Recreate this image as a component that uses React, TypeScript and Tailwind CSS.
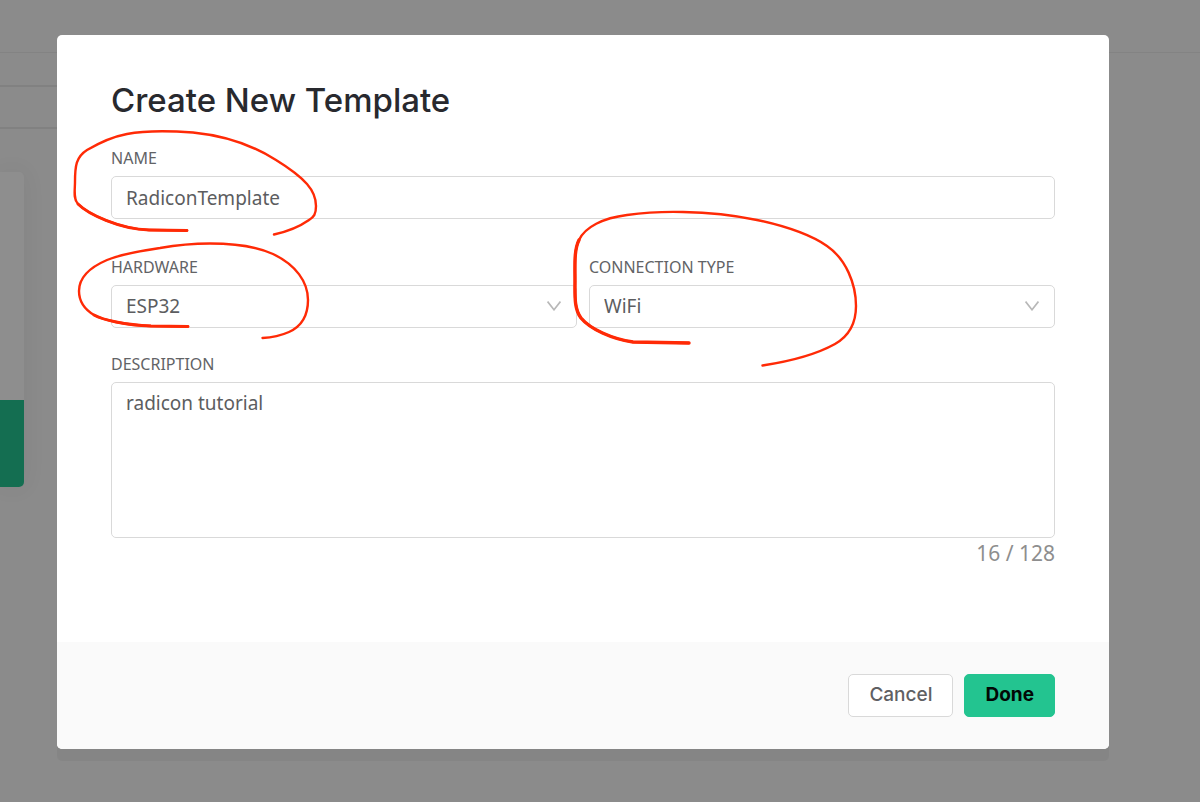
import { useState } from "react";

const labelStyles = "block text-base leading-6 mb-1.5 uppercase text-[#626366]";
const fieldStyles = "block w-full border border-[#d9d9d9] rounded-[5px] bg-white px-3.5 text-[19px] text-[#5c5d60] outline-none focus:border-[#23c490]";
const buttonStyles = "h-[43px] px-5 rounded-[5px] border text-[19px] font-['Inter',sans-serif]";

type SelectFieldProps = {
    id: string
    label: string
    options: string[]
}

function SelectField({ id, label, options }: SelectFieldProps) {
    return (
        <div>
            <label htmlFor={id} className={labelStyles}>{label}</label>
            <div className="relative">
                <select id={id} className={`${fieldStyles} h-[43px] appearance-none`}>
                    {options.map((option) => (
                        <option key={option}>{option}</option>
                    ))}
                </select>
                <svg
                    viewBox="0 0 14 10"
                    className="absolute right-4 top-4 w-3.5 h-2.5 pointer-events-none"
                    fill="none"
                    stroke="#b8b8b8"
                    strokeWidth="1.6"
                >
                    <path d="M0.6 0.6 L7 8.8 L13.4 0.6" />
                </svg>
            </div>
        </div>
    );
}

// Dimmed page behind the dialog
function Backdrop() {
    return (
        <div className="col-start-1 row-start-1 overflow-hidden" aria-hidden="true">
            <div className="h-[53px] border-b border-[#838383]" />
            <div className="w-1/2 mt-8 h-[44px] border-y-2 border-[#818181]" />
            <div className="w-6 mt-[43px] h-[315px] flex flex-col rounded-r-[5px] overflow-hidden bg-[#8e8e8e] shadow-[0_0_24px_rgba(0,0,0,0.06)]">
                <div className="flex-1" />
                <div className="h-[87px] bg-[#146e51]" />
            </div>
        </div>
    );
}

// Hand-drawn marks around the fields to fill in
function Marks() {
    return (
        <svg
            className="absolute inset-0 w-full h-full pointer-events-none"
            fill="none"
            stroke="#ff2a06"
            strokeWidth="2.4"
            strokeLinecap="round"
            strokeLinejoin="round"
            aria-hidden="true"
        >
            <path d="M187 230.5 L149 230 C119 229 88 214 78 204 C73 199 75 190 75 182 C75 166 76 157 87 150 C99 143 111 137 127 134 C148 130 172 131 193 132.5 C228 136 254 146 276 160 C289 168 299 175 307 184 C314 192 316 199 316 206 C316 214 314 217 309 220 C299 227 290 231 274 234.5" />
            <path strokeWidth="2.9" d="M187 230.5 L149 230 C119 229 88 214 78 204" />
            <path d="M188 326.5 L151 326 C125 325 103 320 94 315 C84 309 79 300 79 291 C79 276 93 266 107 260 C119 255 140 251 160 248 C177 245 194 243.5 210 243.5 C238 243.5 258 247 273 254 C296 265 308 282 308 300 C308 317 300 327 289 332 C280 336 272 337.5 262.5 338" />
            <path strokeWidth="2.9" d="M188 326.5 L151 326 C125 325 103 320 94 315" />
            <path d="M689 343 L633 342 C612 339 590 329 581 318 C574 309 575 295 575 281 C575 264 574 250 579 240 C585 227 603 218 627 215 C645 212.5 664 211.5 683 212 C714 212.5 733 215 757 220 C785 226 811 235 827 246 C846 259 856 284 856 306 C856 324 849 336 835 344 C817 354 792 361 762.5 365.5" />
            <path strokeWidth="3.4" d="M689 343 L633 342 C612 339 590 329 581 318 C574 309 575 295 575 281 C575 264 574 250 579 240" />
        </svg>
    );
}

export default function App() {
    const [name, setName] = useState("RadiconTemplate");
    const [description, setDescription] = useState("radicon tutorial");

    return (
        <div className="relative grid min-h-screen bg-[#8b8b8b] font-['Noto_Sans',sans-serif]">
            <Backdrop />

            <div className="col-start-1 row-start-1 pt-[35px] pb-[52px] pl-[57px] pr-[91px]">
                <form
                    role="dialog"
                    aria-labelledby="dialog-title"
                    onSubmit={(e) => e.preventDefault()}
                    className="rounded-[5px] overflow-hidden bg-white shadow-[0_12px_0_rgba(0,0,0,0.04)]"
                >
                    <div className="px-[54px] pt-[43px] pb-[74px]">
                        <h1 id="dialog-title" className="text-[33px] leading-[44px] mb-6 font-medium text-[#28292e] font-['Inter',sans-serif]">
                            Create New Template
                        </h1>

                        {/* Name */}
                        <div className="mb-9">
                            <label htmlFor="name" className={labelStyles}>Name</label>
                            <input
                                id="name"
                                type="text"
                                value={name}
                                onChange={(e) => setName(e.target.value)}
                                className={`${fieldStyles} h-[43px]`}
                            />
                        </div>

                        {/* Hardware and connection */}
                        <div className="grid grid-cols-2 gap-3 mb-6">
                            <SelectField id="hardware" label="Hardware" options={["ESP32", "ESP8266", "Arduino"]} />
                            <SelectField id="connection" label="Connection type" options={["WiFi", "Ethernet", "GSM"]} />
                        </div>

                        {/* Description */}
                        <label htmlFor="description" className={labelStyles}>Description</label>
                        <textarea
                            id="description"
                            maxLength={128}
                            value={description}
                            onChange={(e) => setDescription(e.target.value)}
                            className={`${fieldStyles} h-[156px] py-1.5 leading-7 resize-none`}
                        />
                        <p className="text-right text-[21px] leading-[30px] text-[#8e8e8e]">
                            {description.length} / 128
                        </p>
                    </div>

                    <div className="flex justify-end gap-[11px] px-[54px] py-8 bg-[#fafafa]">
                        <button type="button" className={`${buttonStyles} border-[#d9d9d9] bg-white font-medium text-[#5f6063]`}>
                            Cancel
                        </button>
                        <button type="submit" className={`${buttonStyles} border-[#23c490] bg-[#23c490] font-bold text-[#020806]`}>
                            Done
                        </button>
                    </div>
                </form>
            </div>

            <Marks />
        </div>
    );
}
